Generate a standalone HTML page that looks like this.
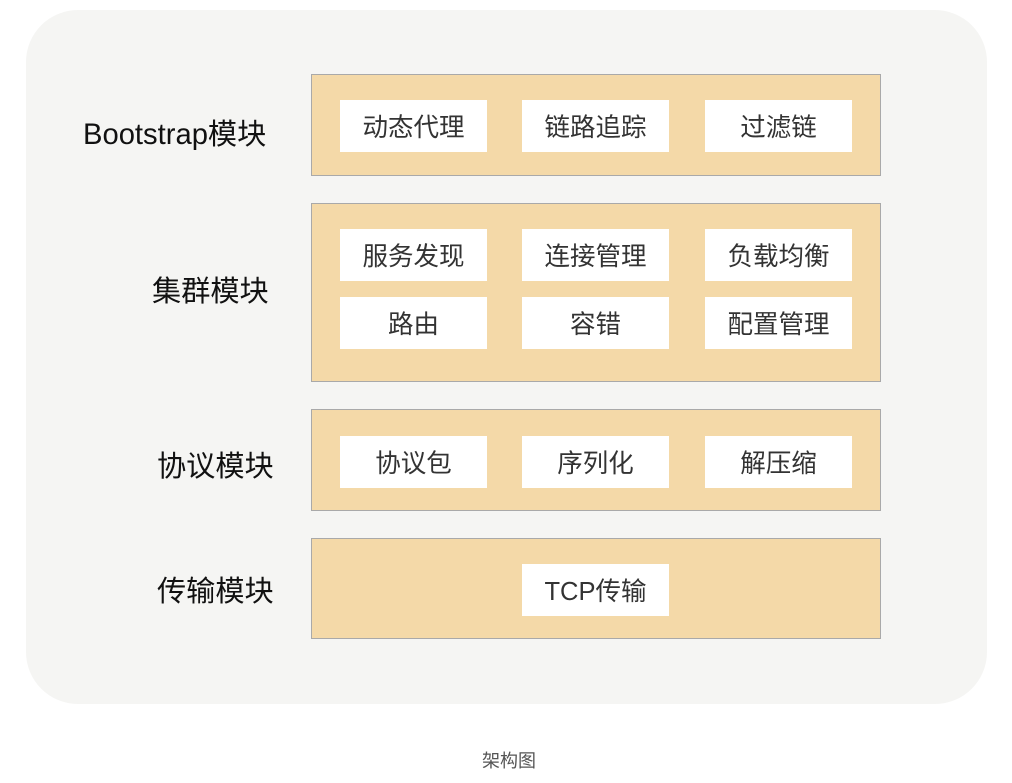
<!DOCTYPE html>
<html><head><meta charset="utf-8"><style>
body{margin:0;width:1012px;height:783px;background:#fff;position:relative;overflow:hidden;font-family:"Liberation Sans","Noto Sans CJK SC",sans-serif}
.panel{position:absolute;left:26px;top:10px;width:961px;height:694px;background:#f5f5f3;border-radius:52px}
.band{position:absolute;left:311px;width:568px;background:#f4d9a8;border:1px solid #a9a9a9}
.box{position:absolute;width:147px;height:52px;background:#fff;color:#333;font-size:25.5px;line-height:56px;text-align:center;white-space:nowrap}
.lbl{position:absolute;font-size:29.2px;color:#111;line-height:32px;white-space:nowrap}
.cap{position:absolute;left:0;width:1018px;top:747px;text-align:center;font-size:18px;color:#555}
</style></head><body>
<div class="panel"></div>
<div class="band" style="top:74px;height:100px"></div>
<div class="band" style="top:203px;height:177px"></div>
<div class="band" style="top:409px;height:100px"></div>
<div class="band" style="top:538px;height:99px"></div>
<div class="lbl" style="left:83px;top:119px">Bootstrap模块</div>
<div class="lbl" style="left:152px;top:276px">集群模块</div>
<div class="lbl" style="left:157px;top:451px">协议模块</div>
<div class="lbl" style="left:157px;top:576px">传输模块</div>
<div class="box" style="left:340px;top:100px">动态代理</div>
<div class="box" style="left:522px;top:100px">链路追踪</div>
<div class="box" style="left:705px;top:100px">过滤链</div>
<div class="box" style="left:340px;top:229px">服务发现</div>
<div class="box" style="left:522px;top:229px">连接管理</div>
<div class="box" style="left:705px;top:229px">负载均衡</div>
<div class="box" style="left:340px;top:297px">路由</div>
<div class="box" style="left:522px;top:297px">容错</div>
<div class="box" style="left:705px;top:297px">配置管理</div>
<div class="box" style="left:340px;top:436px">协议包</div>
<div class="box" style="left:522px;top:436px">序列化</div>
<div class="box" style="left:705px;top:436px">解压缩</div>
<div class="box" style="left:522px;top:564px">TCP传输</div>
<div class="cap">架构图</div>
</body></html>
